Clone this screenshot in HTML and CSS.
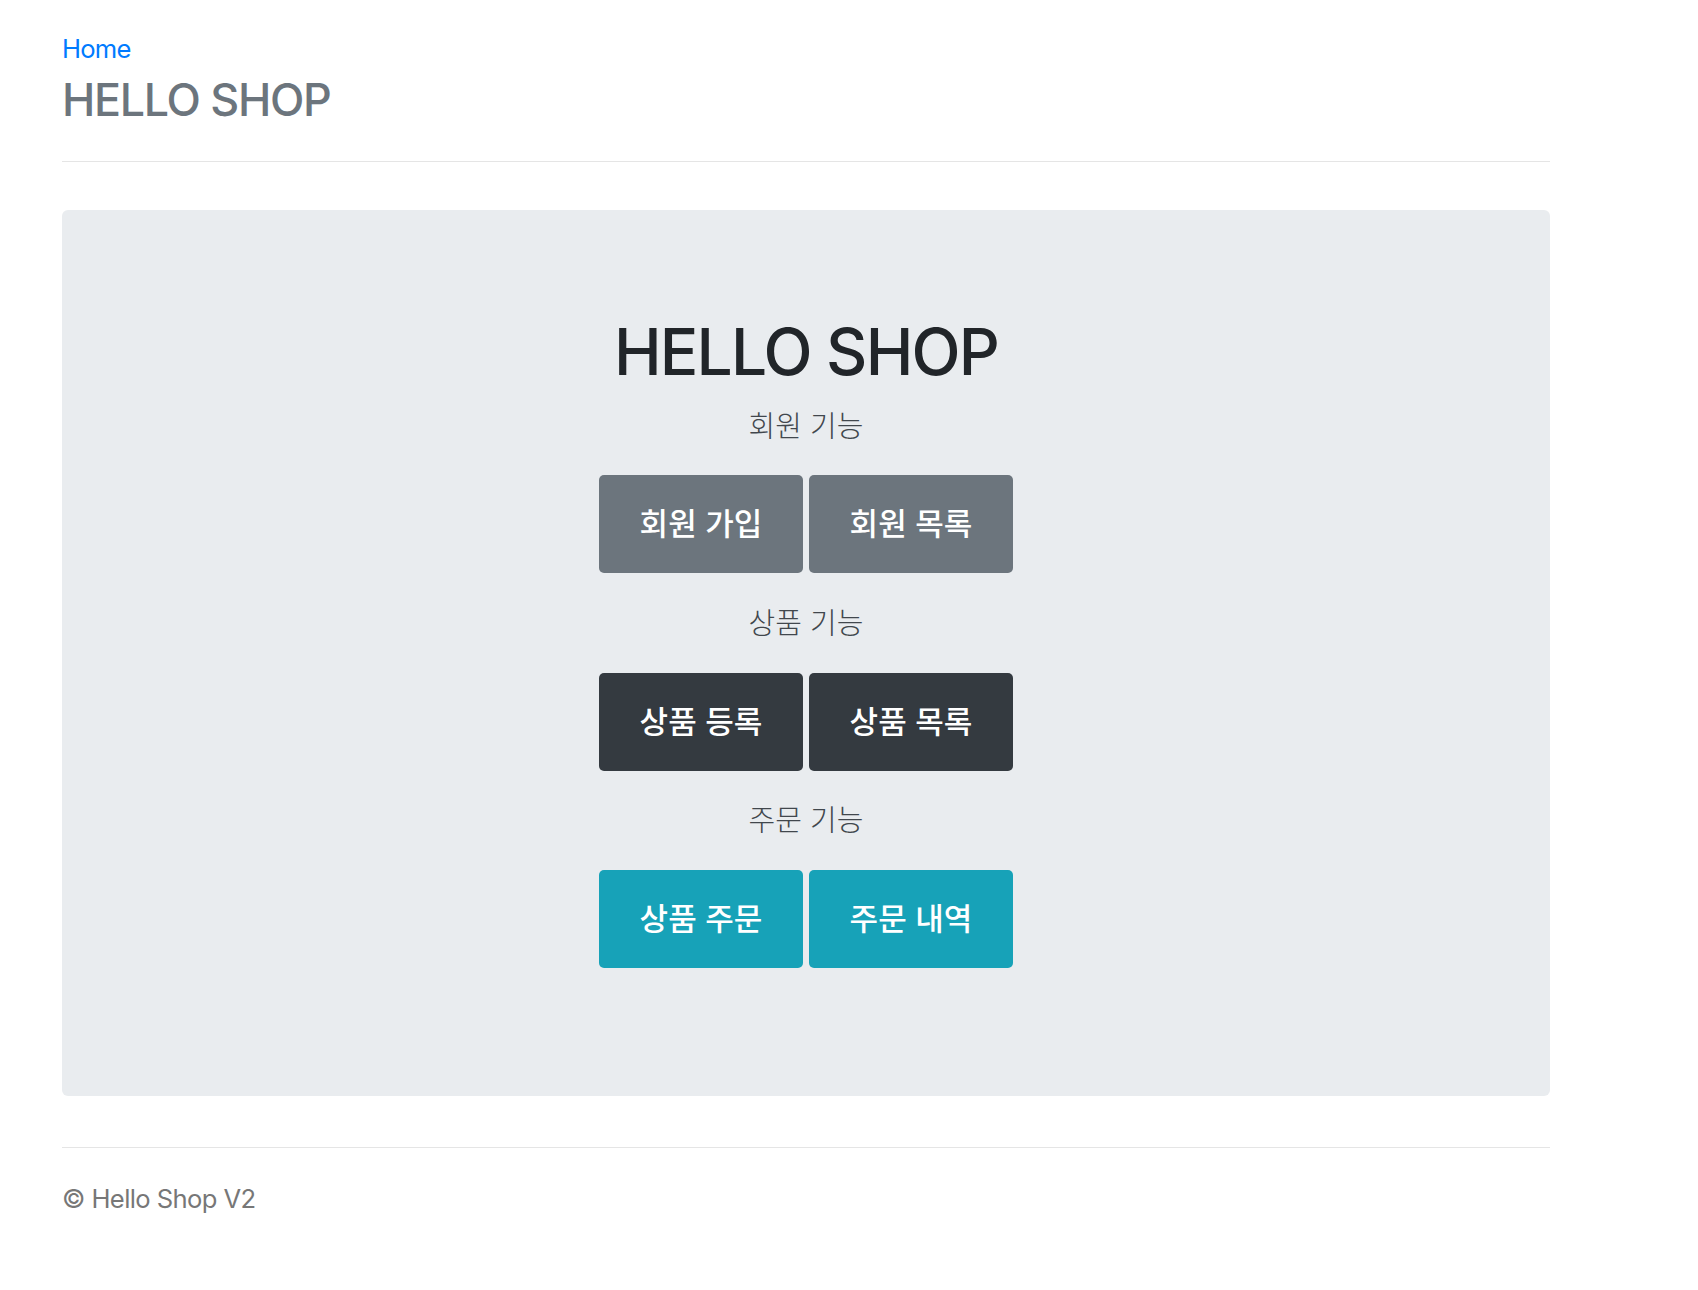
FILE: index.html
```html
<!DOCTYPE html>
<html lang="ko">
<head>
<meta charset="utf-8">
<title>HELLO SHOP</title>
<link rel="stylesheet" href="styles.css">
</head>
<body>
<div class="container">
  <div class="header">
    <a class="home" href="#">Home</a>
    <h3 class="brand">HELLO SHOP</h3>
  </div>
  <div class="jumbotron">
    <h1 class="title">HELLO SHOP</h1>
    <p class="lead">회원 기능</p>
    <p class="btn-row">
      <a class="btn btn-secondary" href="#">회원 가입</a>
      <a class="btn btn-secondary" href="#">회원 목록</a>
    </p>
    <p class="lead">상품 기능</p>
    <p class="btn-row">
      <a class="btn btn-dark" href="#">상품 등록</a>
      <a class="btn btn-dark" href="#">상품 목록</a>
    </p>
    <p class="lead">주문 기능</p>
    <p class="btn-row">
      <a class="btn btn-info" href="#">상품 주문</a>
      <a class="btn btn-info" href="#">주문 내역</a>
    </p>
  </div>
  <div class="footer">
    <p class="copy">&copy; Hello Shop V2</p>
  </div>
</div>
</body>
</html>
```
FILE: styles.css
```css
html, body {
  margin: 0;
  padding: 0;
  background: #ffffff;
}
body {
  font-family: Inter, "Noto Sans CJK KR", sans-serif;
  font-size: 25.6px;
  line-height: 38.4px;
  color: #212529;
}
.container {
  width: 1488px;
  margin-left: 62px;
}
.header {
  padding-top: 30px;
  padding-bottom: 33px;
  border-bottom: 1px solid #e5e5e5;
}
.home {
  display: block;
  color: #007bff;
  text-decoration: none;
  line-height: 38.4px;
  letter-spacing: -0.75px;
}
.brand {
  margin: 5.6px 0 0 0;
  font-size: 44.8px;
  line-height: 53.8px;
  font-weight: 500;
  color: #6c757d;
  letter-spacing: -1.3px;
}
.jumbotron {
  margin-top: 48px;
  margin-bottom: 51.2px;
  padding: 104.4px 32px 102.4px 32px;
  background: #e9ecef;
  border-radius: 6px;
  text-align: center;
}
.title {
  margin: 0 0 10.8px 0;
  font-size: 64px;
  line-height: 76.8px;
  font-weight: 500;
  letter-spacing: -1.8px;
  color: #212529;
}
.lead {
  margin: 0 0 25.6px 0;
  padding-bottom: 4px;
  font-family: "Noto Sans CJK KR", sans-serif;
  font-size: 29px;
  line-height: 44px;
  font-weight: 300;
  color: #41474d;
}
.btn-row {
  margin: 0 0 25.6px 0;
  display: flex;
  justify-content: center;
  gap: 6px;
}
.btn {
  display: block;
  width: 204px;
  height: 98px;
  padding-bottom: 4px;
  line-height: 94px;
  border-radius: 5px;
  color: #ffffff;
  text-decoration: none;
  font-family: "Noto Sans CJK KR", sans-serif;
  font-size: 31px;
  font-weight: 500;
  box-sizing: border-box;
}
.btn-secondary { background: #6c757d; }
.btn-dark { background: #343a40; }
.btn-info { background: #17a2b8; }
.footer {
  padding-top: 32px;
  border-top: 1px solid #e5e5e5;
  color: #777777;
}
.copy {
  margin: 0;
  letter-spacing: -0.6px;
}
```
